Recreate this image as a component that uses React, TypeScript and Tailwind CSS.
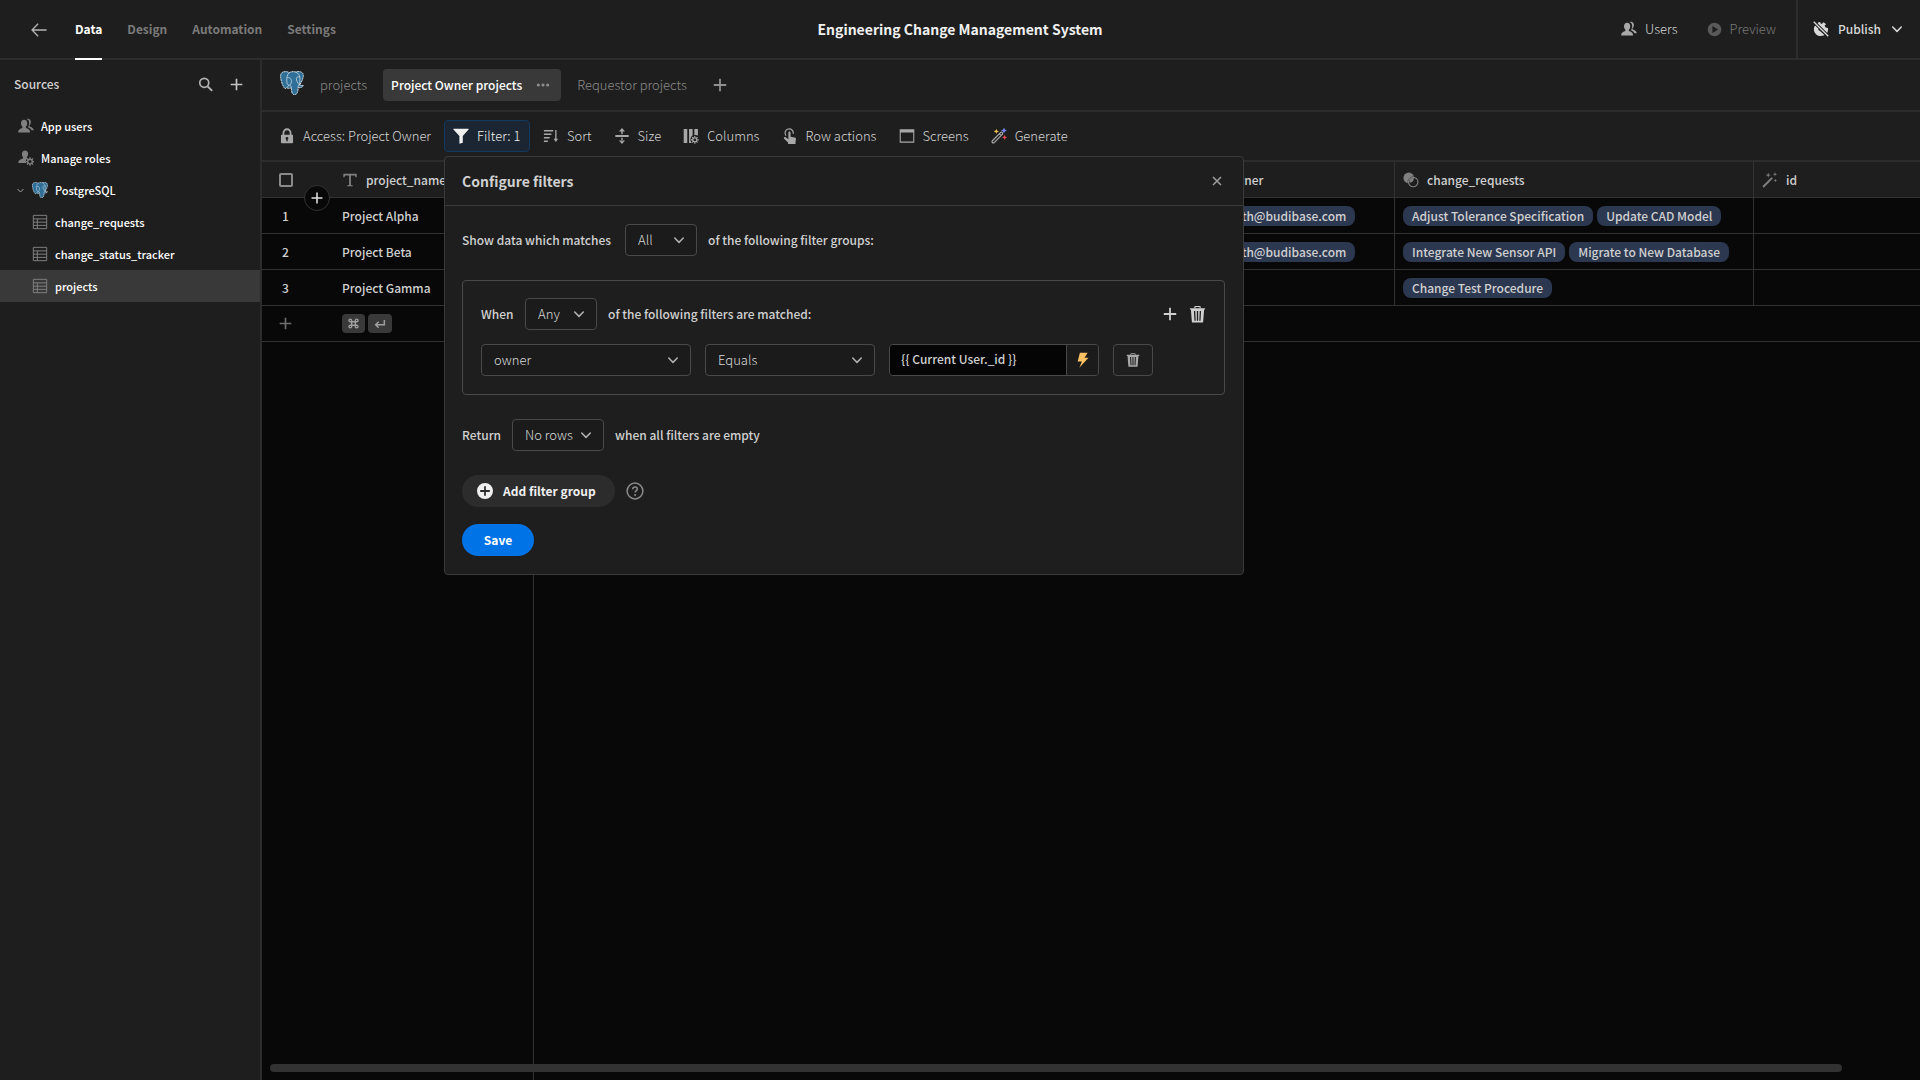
import type { ReactNode } from "react";

type IconProps = { className?: string };

function Icon({ className = "size-4", children }: { className?: string; children: ReactNode }) {
  return (
    <svg viewBox="0 0 18 18" className={className} fill="currentColor" aria-hidden="true">
      {children}
    </svg>
  );
}

const HEAD =
  "M6.9 1.6C9 1.6 10.4 3.2 10.4 5.4c0 1.6-.6 3-1.4 3.9-.4.5-.4 1.2.1 1.6 1.4.7 4.4 1.6 4.4 4.2V16H.3v-.9c0-2.6 3-3.500 4.400-4.200.5-.4.5-1.100.1-1.600C4 8.400 3.400 7 3.400 5.400 3.400 3.200 4.800 1.600 6.900 1.600Z";

function UsersIcon({ className }: IconProps) {
  return (
    <Icon className={className}>
      <path d={HEAD} transform="translate(0 .4)" />
      <path d="M9.800 1.200C10.200 1 10.700.9 11.200.9c2 0 3.300 1.500 3.300 3.600 0 1.500-.5 2.700-1.300 3.500-.5.5-.4 1.200.1 1.500 1.400.8 4.300 1.500 4.500 4.300h-2.600c-.6-1.800-2.300-2.700-4-3.500.9-1.200 1.400-2.900 1.400-4.600 0-2-.9-3.700-2.800-4.500Z" />
    </Icon>
  );
}

function UserGearIcon({ className }: IconProps) {
  return (
    <Icon className={className}>
      <path d="M8 .5c2 0 3.400 1.600 3.400 3.800 0 1.500-.5 2.800-1.300 3.700-.4.5-.3 1.200.2 1.500-1.500 1.200-2 3.300-1.100 5H.5V14c0-2.600 3.200-3.500 4.800-4.300.6-.3.7-1 .3-1.500-.8-.9-1.200-2.200-1.200-3.800C4.400 2.200 5.900.5 8 .5Z" />
      <circle cx="13.500" cy="13" r="2.600" fill="none" stroke="currentColor" strokeWidth="1.500" />
      <path d="M13.500 8.200v2M13.500 15.800v2M8.700 13h2M16.300 13h1.700M10.100 9.600l1.400 1.400M15.500 15l1.400 1.400M16.900 9.600 15.500 11M11.500 15l-1.400 1.400" stroke="currentColor" strokeWidth="1.500" />
    </Icon>
  );
}

function PlusIcon({ className }: IconProps) {
  return (
    <Icon className={className}>
      <path d="M8 2h2v6h6v2h-6v6H8v-6H2V8h6z" />
    </Icon>
  );
}

function ChevronIcon({ className }: IconProps) {
  return (
    <Icon className={className}>
      <path d="M3.500 6.500 9 12l5.500-5.500" fill="none" stroke="currentColor" strokeWidth="2" strokeLinecap="round" strokeLinejoin="round" />
    </Icon>
  );
}

function TableIcon({ className }: IconProps) {
  return (
    <Icon className={className}>
      <path d="M1.500 1.500h15v15h-15zM1.500 5.500h15M1.500 9.200h15M1.500 12.800h15M6 5.500v11" fill="none" stroke="currentColor" strokeWidth="1.100" />
    </Icon>
  );
}

function TrashIcon({ className }: IconProps) {
  return (
    <Icon className={className}>
      <path d="M6.200 2.500V1.400C6.200.8 6.600.4 7.200.4h3.600c.6 0 1 .4 1 1v1.100" fill="none" stroke="currentColor" strokeWidth="1.200" />
      <path fillRule="evenodd" d="M1 2.300h16v1.500h-1L14.900 17.600H3.100L2 3.800H1zM5.200 5.200l.6 10.500h1.300L6.600 5.200zM8.300 5.200v10.500h1.400V5.200zM11.400 5.200l-.5 10.500h1.300l.6-10.500z" />
    </Icon>
  );
}

function PostgresLogo({ className }: IconProps) {
  return (
    <svg viewBox="0 0 24 24" className={className} aria-hidden="true">
      <path
        d="M5 17.500C2.600 15.500.6 9 .6 4.800.6 1.800 2.800.5 5.400.6c1.600 0 3 .4 4 1C11.300.4 13.800.4 15.500 1c3-1 7.600-.6 7.800 3.200.1 2.800-1.600 6.800-3.700 9.900 1.300.5 2.700.2 3.700.4-.6 1.900-3.200 2.400-5.100 2.100-.3 3.300-.4 6.700-3.400 7-3.200.2-3.300-3.200-3.400-7-1.600.8-3.600 1.200-4.800 0-.6.700-1 1.200-1.600.900Z"
        fill="#2f6f98"
        stroke="#dfe8ee"
        strokeWidth=".9"
        strokeDasharray="2.200 .5"
      />
      <path
        d="M9.400 1.600C7 3.500 6.600 7 6.800 10.500c.1 2 .6 3.300 2 3.700 1.300.3 2.600-1.500 2.600-3.600 0-2.300-.6-4.200-4-4M15.500 1c2.800 1.200 4.200 3.500 4.400 5.600.1 2.300-.2 5.300-.4 7.300-1.800-1.800-3.300-4.500-3.100-6.600.3-1.400 1.600-1.700 3.400-1.200M8.800 14.200l-1.600 2.400M11.400 16.500c.2-1.200-.5-1.800-1.500-1.700M19.500 13.900c-1.300.2-1.500 1.200-1.300 2.700"
        fill="none"
        stroke="#dfe8ee"
        strokeWidth=".7"
      />
    </svg>
  );
}

function LockIcon() {
  return (
    <Icon>
      <path d="M5 8V5.500C5 3.200 6.800 1.400 9 1.400s4 1.800 4 4.100V8" fill="none" stroke="currentColor" strokeWidth="2" />
      <path fillRule="evenodd" d="M3 7.500h12c.5 0 .8.3.8.8v8c0 .5-.3.8-.8.8H3c-.5 0-.8-.3-.8-.8v-8c0-.5.3-.8.8-.8ZM9 10a1.500 1.500 0 0 0-.8 2.800V15h1.600v-2.200A1.500 1.500 0 0 0 9 10Z" />
    </Icon>
  );
}

function FilterIcon() {
  return (
    <Icon>
      <path d="M.8.800h16.400c.4 0 .6.500.3.800L11 9v7.600L7.200 17.800V9L.5 1.600C.2 1.300.4.800.8.800Z" />
    </Icon>
  );
}

function SortIcon() {
  return (
    <Icon>
      <path d="M1 2.200h10.500v1.600H1zM1 6.200h8.500v1.600H1zM1 10.200h6.500v1.600H1zM1 14.200h4.500v1.600H1zM13.700 2.200h1.500v10.500h-1.500z" />
      <path d="m11.900 12 2.550 3.800L17 12z" />
    </Icon>
  );
}

function SizeIcon() {
  return (
    <Icon>
      <path d="M1.500 8h15v2h-15zM8.200 3h1.600v4H8.200zM8.200 11h1.600v4H8.200zM9 0l3.400 4H5.600zM9 18l3.400-4H5.600z" />
    </Icon>
  );
}

function ColumnsIcon() {
  return (
    <Icon>
      <path d="M.8 1h4v16h-4zM6.800 1h4v7.500c-1.600 1-2.400 2.600-2.400 4.300 0 1.600.5 3 1.600 4.200H6.800zM12.800 1h4v7.400c-1.200-.6-2.600-.8-4-.5z" />
      <circle cx="13.300" cy="13.300" r="2.300" fill="none" stroke="currentColor" strokeWidth="1.400" />
      <path d="M13.300 9v1.700M13.300 16v1.700M9 13.300h1.700M16 13.300h1.700M10.300 10.300l1.200 1.200M15.100 15.100l1.200 1.200M16.300 10.300l-1.200 1.200M11.500 15.100l-1.200 1.200" stroke="currentColor" strokeWidth="1.300" />
    </Icon>
  );
}

function TouchIcon() {
  return (
    <Icon>
      <path d="M4.600 8.600A4.600 4.600 0 1 1 12.600 6.500" fill="none" stroke="currentColor" strokeWidth="1.300" />
      <path d="M7.200 5.200a1.200 1.200 0 0 1 2.400 0v4.600l4.600.9c1 .2 1.600.9 1.500 1.900l-.5 3V18H6.800v-1.700L2.400 12c-.5-.6-.4-1.200.1-1.600.5-.3 1-.3 1.500 0l3.200 2.300z" />
    </Icon>
  );
}

function ScreensIcon() {
  return (
    <Icon>
      <path fillRule="evenodd" d="M.8 1.500h16.400v15H.8zM2 5v10.300h14V5z" />
    </Icon>
  );
}

function GenerateIcon() {
  return (
    <Icon>
      <path d="M1.600 14.400 10.700 5.200c.6-.6 1.500-.6 2 0 .6.600.6 1.500 0 2L3.600 16.400c-.6.600-1.500.6-2 0-.6-.500-.6-1.400 0-2ZM9.400 6.600l2 2" fill="none" stroke="currentColor" strokeWidth="1.400" />
      <path fill="#e8c14b" d="m6 1 .9 1.900 1.900.9-1.900.9L6 6.600l-.9-1.900-1.900-.9 1.900-.9z" />
      <path fill="#7a86ee" d="m14.600-.4 1 2.200 2.200 1-2.200 1-1 2.200-1-2.200-2.200-1 2.200-1z" />
      <path fill="#e5484d" d="m15.300 7.800.9 1.900 1.900.9-1.900.9-.9 1.900-.9-1.900-1.900-.9 1.900-.9z" />
    </Icon>
  );
}

function WandIcon({ className }: IconProps) {
  return (
    <Icon className={className}>
      <path d="M10.600 5.800 12.200 7.400 2 17.600.4 16zM7 .5l.7 2.300L10 3.500l-2.300.7L7 6.500l-.7-2.300L4 3.500l2.300-.7zM14.600 0l.6 2 2 .6-2 .6-.6 2-.6-2-2-.6 2-.6zM15 7.600l.5 1.500 1.500.5-1.500.5-.5 1.500-.5-1.500-1.500-.5 1.500-.5z" />
    </Icon>
  );
}

function RelationIcon({ className }: IconProps) {
  return (
    <Icon className={className}>
      <circle cx="6.500" cy="6.700" r="6" />
      <circle cx="11.500" cy="11.300" r="5.700" fill="#1e1e1e" stroke="#1e1e1e" />
      <circle cx="11.500" cy="11.300" r="5.300" fill="none" stroke="currentColor" strokeWidth="1.300" />
      <path d="M7.300 11.800c-.6-3 1.400-5.300 4.800-5.100.4 3.200-1.600 5.300-4.800 5.100Z" />
    </Icon>
  );
}

function GlobeStrikeIcon({ className }: IconProps) {
  return (
    <Icon className={className}>
      <path d="M5.200 2.200A8 8 0 0 1 8 1.200l1 2.200 1.600-.6.700-1.300c1.300.4 2.500 1.200 3.400 2.200L13 5l1.200 2.200 2.600.6c.4 2.200-.1 4.300-1.200 6L5.200 3.400ZM2.600 4.800l4 4-.8 1 2.400 1.600 4.800 4.300-1.200.6-3.200.6C4.500 17 1 13.500 1 9.200c0-1.600.600-3.200 1.600-4.400Z" />
      <path d="m.8.800 16.400 16.400" stroke="#1e1e1e" strokeWidth="3.600" />
      <path d="m.8.800 16.400 16.400" stroke="currentColor" strokeWidth="1.500" />
    </Icon>
  );
}

function Dropdown({ label, value, className }: { label: string; value: string; className: string }) {
  return (
    <div className={`relative flex h-8 items-center ${className}`}>
      <select
        aria-label={label}
        defaultValue={value}
        className="h-8 w-full appearance-none rounded border border-[#494949] bg-[#1b1b1b] pl-3 text-[13px] leading-5 font-light text-[#dadada]"
      >
        <option>{value}</option>
      </select>
      <ChevronIcon className="pointer-events-none absolute right-[11px] size-[14px] text-[#b0b0b0]" />
    </div>
  );
}

function ToolButton({ icon, children }: { icon: ReactNode; children: ReactNode }) {
  return (
    <button className="flex h-8 items-center gap-2 rounded border border-transparent px-2 text-[#a8a8a8]">
      {icon}
      <span className="whitespace-nowrap text-[#d6d6d6]">{children}</span>
    </button>
  );
}

function FilterPanel() {
  return (
    <section
      aria-label="Configure filters"
      className="absolute top-full left-0 z-20 mt-1 w-[800px] rounded border border-[#3a3a3a] bg-[#1e1e1e] text-xs leading-5 font-medium text-[#d0d0d0]"
    >
      <header className="flex h-[49px] items-center justify-between border-b border-[#3a3a3a] pr-[18px] pl-[17px]">
        <h2 className="text-sm font-bold">Configure filters</h2>
        <button aria-label="Close" className="p-0.5 text-[#a0a0a0]">
          <Icon className="size-3">
            <path d="m3 3 12 12M15 3 3 15" stroke="currentColor" strokeWidth="2.200" />
          </Icon>
        </button>
      </header>
      <div className="py-[18px] pr-[18px] pl-[17px]">
        <div className="flex items-center gap-[11px]">
          <span className="w-[152px]">Show data which matches</span>
          <Dropdown label="Group match" value="All" className="w-[72px]" />
          <span>of the following filter groups:</span>
        </div>
        <div className="mt-6 rounded border border-[#494949] px-[18px] pt-[17px] pb-[18px]">
          <div className="flex items-center gap-[11px]">
            <span className="w-[33px]">When</span>
            <Dropdown label="Filter match" value="Any" className="w-[72px]" />
            <span>of the following filters are matched:</span>
            <button aria-label="Add filter" className="ml-auto">
              <PlusIcon className="size-4" />
            </button>
            <button aria-label="Delete group">
              <TrashIcon className="size-[17px]" />
            </button>
          </div>
          <div className="mt-[14px] flex gap-[14px]">
            <Dropdown label="Column" value="owner" className="w-[210px]" />
            <Dropdown label="Operator" value="Equals" className="w-[170px]" />
            <div className="flex h-8 w-[210px] overflow-hidden rounded border border-[#494949]">
              <input
                aria-label="Value"
                defaultValue="{{ Current User._id }}"
                className="min-w-0 flex-1 bg-[#050505] px-[11px] pb-0.5"
              />
              <button aria-label="Bindings" className="flex w-8 items-center justify-center border-l border-[#494949] bg-[#1b1b1b] text-[#fbc163]">
                <Icon>
                  <path d="M5.500.8h8.700L10.800 6.500h4.400L4.800 17.600l3-7H3z" />
                </Icon>
              </button>
            </div>
            <button aria-label="Delete filter" className="flex h-8 w-10 items-center justify-center rounded border border-[#494949] text-[#a8a8a8]">
              <TrashIcon className="size-[14px]" />
            </button>
          </div>
        </div>
        <div className="mt-6 flex items-center gap-[11px]">
          <span className="w-[39px]">Return</span>
          <Dropdown label="Empty behaviour" value="No rows" className="w-[92px]" />
          <span>when all filters are empty</span>
        </div>
        <div className="mt-6 flex items-center gap-[11px]">
          <button className="flex h-8 w-[153px] items-center gap-[10px] rounded-full bg-[#2c2c2c] pl-[15px] font-bold text-[#f0f0f0]">
            <Icon>
              <path fillRule="evenodd" d="M9 0a9 9 0 1 1 0 18A9 9 0 0 1 9 0ZM8 3.600V8H3.600v2H8v4.400h2V10h4.400V8H10V3.600z" />
            </Icon>
            Add filter group
          </button>
          <button aria-label="Help" className="text-[#8c8c8c]">
            <Icon className="size-[18px]">
              <circle cx="9" cy="9" r="7.900" fill="none" stroke="currentColor" strokeWidth="1.500" />
              <path d="M6.700 7.200C6.700 5.700 7.700 4.900 9 4.900s2.300.8 2.300 2c0 1.700-2.200 1.800-2.200 3.700" fill="none" stroke="currentColor" strokeWidth="1.500" />
              <circle cx="9.100" cy="12.900" r="1" />
            </Icon>
          </button>
        </div>
        <button className="mt-[17px] h-8 w-[72px] rounded-full bg-[#0073e6] font-bold text-white">Save</button>
      </div>
    </section>
  );
}

const NAV = ["Data", "Design", "Automation", "Settings"];
const TABLES = ["change_requests", "change_status_tracker", "projects"];
const ROWS = [
  { name: "Project Alpha", owner: "mareth@budibase.com", requests: ["Adjust Tolerance Specification", "Update CAD Model"] },
  { name: "Project Beta", owner: "mareth@budibase.com", requests: ["Integrate New Sensor API", "Migrate to New Database"] },
  { name: "Project Gamma", owner: "", requests: ["Change Test Procedure"] },
];

function Chip({ children }: { children: ReactNode }) {
  return (
    <span className="flex h-5 items-center rounded-lg bg-[#2c3850] px-[9px] whitespace-nowrap">{children}</span>
  );
}

export default function App() {
  return (
    <div className="flex h-screen flex-col overflow-hidden bg-[#1e1e1e] font-['Noto_Sans_CJK_SC','Noto_Sans',sans-serif] text-[13px] leading-5 text-[#d0d0d0]">
      <header className="grid h-[60px] shrink-0 grid-cols-3 border-b-2 border-[#2c2c2c]">
        <nav className="-mb-0.5 flex gap-[25px] pl-[31px] font-bold text-[#7a7a7a]">
          <a href="#back" aria-label="Back" className="mr-[3px] flex items-center text-[#b4b4b4]">
            <Icon className="size-4">
              <path d="M17.500 9H1.500M8 2 1.200 9 8 16" fill="none" stroke="currentColor" strokeWidth="1.500" />
            </Icon>
          </a>
          {NAV.map((item) => (
            <a
              key={item}
              href={`#${item}`}
              className={`flex items-center border-b-2 text-xs ${item === "Data" ? "border-white text-white" : "border-transparent"}`}
            >
              {item}
            </a>
          ))}
        </nav>
        <h1 className="self-center text-center text-sm font-bold whitespace-nowrap text-[#f0f0f0]">
          Engineering Change Management System
        </h1>
        <div className="flex items-center justify-end font-light">
          <button className="mr-[29px] flex items-center gap-2 text-[#a8a8a8]">
            <UsersIcon />
            <span className="text-[#d6d6d6]">Users</span>
          </button>
          <button disabled className="mr-5 flex items-center gap-2 text-[#5a5a5a]">
            <Icon className="size-[15px]">
              <path fillRule="evenodd" d="M9 .8a8.200 8.200 0 1 1 0 16.400A8.200 8.200 0 0 1 9 .8ZM6.500 4.800v8.400L13.300 9z" />
            </Icon>
            <span className="text-[#7a7a7a]">Preview</span>
          </button>
          <button className="flex h-full items-center gap-[9px] border-l-2 border-[#2c2c2c] pr-4 pl-[15px] text-xs font-medium text-[#d8d8d8]">
            <GlobeStrikeIcon />
            Publish
            <ChevronIcon className="size-[14px]" />
          </button>
        </div>
      </header>

      <div className="flex min-h-0 flex-1">
        <aside className="w-[262px] shrink-0 border-r-2 border-[#2c2c2c]">
          <div className="flex h-[50px] items-center pr-4 pb-0.5 pl-[14px] text-xs font-medium">
            <span className="mr-auto">Sources</span>
            <button aria-label="Search" className="mr-4 text-[#b4b4b4]">
              <Icon className="size-[15px]">
                <circle cx="7.500" cy="7" r="5.400" fill="none" stroke="currentColor" strokeWidth="2" />
                <path d="m11.500 11.200 5.500 5.500" stroke="currentColor" strokeWidth="2.400" />
              </Icon>
            </button>
            <button aria-label="Add source" className="text-[#c4c4c4]">
              <PlusIcon className="size-[15px]" />
            </button>
          </div>
          <ul className="text-[11px] font-medium text-white">
            <li>
              <a href="#users" className="flex h-8 items-center gap-[7px] pl-[18px]">
                <UsersIcon className="size-4 text-[#808080]" />
                App users
              </a>
            </li>
            <li>
              <a href="#roles" className="flex h-8 items-center gap-[7px] pl-[18px]">
                <UserGearIcon className="size-4 text-[#808080]" />
                Manage roles
              </a>
            </li>
            <li>
              <a href="#postgresql" className="flex h-8 items-center pl-4">
                <ChevronIcon className="mr-[7px] size-[9px] text-[#a0a0a0]" />
                <PostgresLogo className="mr-[7px] size-4" />
                PostgreSQL
              </a>
            </li>
            {TABLES.map((t) => (
              <li key={t}>
                <a href={`#${t}`} className={`flex h-8 items-center gap-[7px] pl-8 ${t === "projects" ? "bg-[#393939]" : ""}`}>
                  <TableIcon className="size-4 text-[#808080]" />
                  {t}
                </a>
              </li>
            ))}
          </ul>
        </aside>

        <main className="flex min-w-0 flex-1 flex-col bg-[#080808]">
          <div className="flex h-[52px] shrink-0 items-center gap-2 border-b-2 border-[#2c2c2c] bg-[#1e1e1e] pl-[18px] text-[#7a7a7a]">
            <PostgresLogo className="mb-1 size-6" />
            <a href="#all" className="px-2 font-light text-[#8a8a8a]">projects</a>
            <div className="flex h-8 items-center gap-[14px] rounded bg-[#393939] pr-[11px] pl-2">
              <a href="#owner-view" className="text-xs font-medium text-white">Project Owner projects</a>
              <button aria-label="More" className="text-[#8e8e8e]">
                <Icon className="size-[14px]">
                  <circle cx="3" cy="9" r="2" />
                  <circle cx="9" cy="9" r="2" />
                  <circle cx="15" cy="9" r="2" />
                </Icon>
              </button>
            </div>
            <a href="#requestor-view" className="px-2 font-light text-[#8a8a8a]">Requestor projects</a>
            <button aria-label="Add view" className="px-[9px] text-[#909090]">
              <PlusIcon className="size-4" />
            </button>
          </div>

          <div className="flex h-[50px] shrink-0 items-center gap-1 border-b-2 border-[#2c2c2c] bg-[#1e1e1e] pl-2 font-light">
            <ToolButton icon={<LockIcon />}>Access: Project Owner</ToolButton>
            <div className="relative">
              <button className="flex h-8 w-[86px] items-center gap-2 rounded border border-[#123a5e] bg-[#1b2632] px-2 whitespace-nowrap text-[#f0f0f0]">
                <FilterIcon />
                <span>Filter: 1</span>
              </button>
              <FilterPanel />
            </div>
            <ToolButton icon={<SortIcon />}>Sort</ToolButton>
            <ToolButton icon={<SizeIcon />}>Size</ToolButton>
            <ToolButton icon={<ColumnsIcon />}>Columns</ToolButton>
            <ToolButton icon={<TouchIcon />}>Row actions</ToolButton>
            <ToolButton icon={<ScreensIcon />}>Screens</ToolButton>
            <ToolButton icon={<GenerateIcon />}>Generate</ToolButton>
          </div>

          <table className="w-full table-fixed border-separate border-spacing-0 text-left text-xs font-medium">
            <colgroup>
              <col className="w-[72px]" />
              <col className="w-[200px]" />
              <col className="w-[661px]" />
              <col className="w-[200px]" />
              <col className="w-[359px]" />
              <col />
            </colgroup>
            <thead className="bg-[#1e1e1e]">
              <tr className="h-9 [&>th]:border-[#323232] [&>th]:border-b [&>th]:p-0 [&>th]:font-medium">
                <th className="relative">
                  <input
                    type="checkbox"
                    aria-label="Select all rows"
                    className="ml-[17px] block size-[14px] appearance-none rounded-[2px] border-2 border-[#8a8a8a]"
                  />
                  <button
                    aria-label="Insert row"
                    className="absolute top-[23px] left-[42px] z-10 flex size-[26px] items-center justify-center rounded-full border border-[#323232] bg-[#080808] text-[#e0e0e0]"
                  >
                    <PlusIcon className="size-[14px]" />
                  </button>
                </th>
                <th className="border-r">
                  <div className="flex items-center gap-2 pl-2">
                    <Icon className="size-4 text-[#808080]">
                      <path d="M1.500 2h15v4h-1.200l-.8-2.200H10V14.500l2 .4V16H6v-1.100l2-.4V3.800H3.500L2.700 6H1.500z" />
                    </Icon>
                    project_name
                  </div>
                </th>
                <th className="border-r" />
                <th className="border-r">
                  <div className="flex items-center gap-2 pl-2">
                    <UsersIcon className="size-4 text-[#808080]" />
                    owner
                  </div>
                </th>
                <th className="border-r">
                  <div className="flex items-center gap-2 pl-2">
                    <RelationIcon className="size-4 text-[#808080]" />
                    change_requests
                  </div>
                </th>
                <th>
                  <div className="flex items-center gap-2 pl-2">
                    <WandIcon className="size-4 text-[#808080]" />
                    id
                  </div>
                </th>
              </tr>
            </thead>
            <tbody className="[&_td]:border-b [&_td]:border-[#323232] [&_td]:p-0">
              {ROWS.map((row, i) => (
                <tr key={row.name} className="h-9">
                  <td>
                    <span className="block w-[47px] text-center">{i + 1}</span>
                  </td>
                  <td className="border-r">
                    <span className="pl-2">{row.name}</span>
                  </td>
                  <td className="border-r" />
                  <td className="border-r">
                    <div className="flex pl-2">{row.owner && <Chip>{row.owner}</Chip>}</div>
                  </td>
                  <td className="border-r">
                    <div className="flex gap-1 pl-2">
                      {row.requests.map((r) => (
                        <Chip key={r}>{r}</Chip>
                      ))}
                    </div>
                  </td>
                  <td />
                </tr>
              ))}
              <tr className="h-9">
                <td>
                  <button aria-label="Add row" className="flex w-[47px] justify-center text-[#6e6e6e]">
                    <PlusIcon className="size-[15px]" />
                  </button>
                </td>
                <td className="border-r">
                  <div className="flex gap-[3px] pl-2 text-[#a0a0a0]">
                    <kbd className="flex h-[19px] w-[23px] items-center justify-center rounded bg-[#393939]">
                      <Icon className="size-[11px]">
                        <path d="M6 6V4a2.200 2.200 0 1 0-2.200 2.200h10.400A2.200 2.200 0 1 0 12 4v10a2.200 2.200 0 1 0 2.200-2.200H3.800A2.200 2.200 0 1 0 6 14z" fill="none" stroke="currentColor" strokeWidth="2.200" />
                      </Icon>
                    </kbd>
                    <kbd className="flex h-[19px] w-6 items-center justify-center rounded bg-[#393939]">
                      <Icon className="size-3">
                        <path d="M15.500 3v7H3M7 5.500 2.500 10 7 14.500" fill="none" stroke="currentColor" strokeWidth="2.200" />
                      </Icon>
                    </kbd>
                  </div>
                </td>
                <td colSpan={4} />
              </tr>
            </tbody>
          </table>

          <div className="relative flex-1">
            <div className="h-full w-[272px] border-r border-[#323232]" />
            <div className="absolute right-[78px] bottom-2 left-2 h-2 rounded-full bg-[#323232]" />
          </div>
        </main>
      </div>
    </div>
  );
}
